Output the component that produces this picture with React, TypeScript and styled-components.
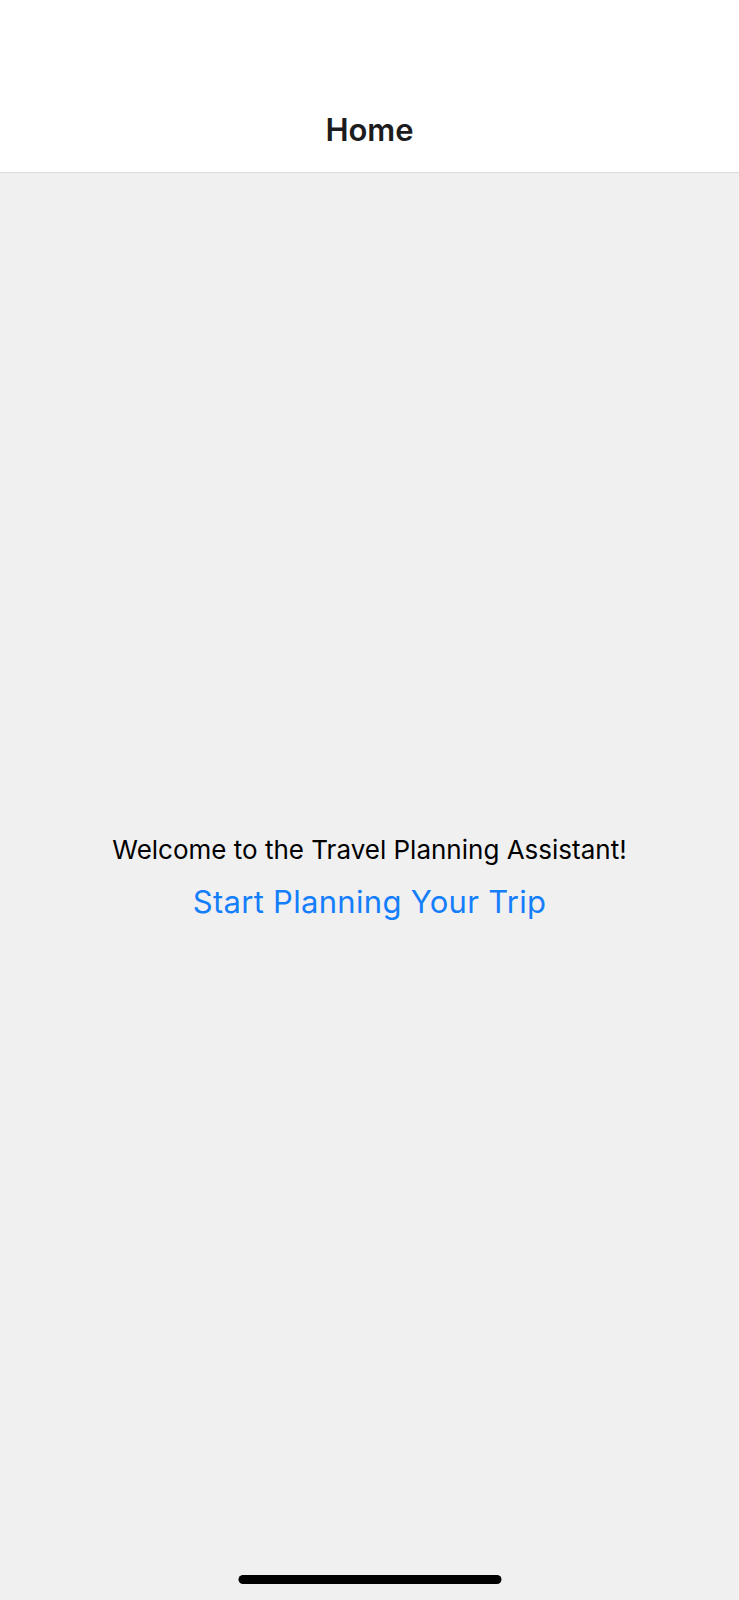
import React from "react";
import styled, { createGlobalStyle } from "styled-components";

const Global = createGlobalStyle`
  html, body { margin: 0; padding: 0; background: #f0f0f0; }
  * { box-sizing: border-box; }
`;

const Page = styled.div`
  position: relative;
  height: 1600px;
  display: flex;
  flex-direction: column;
  background: #f0f0f0;
  font-family: Inter, "Liberation Sans", Arial, sans-serif;
`;

const Header = styled.header`
  height: 173px;
  flex: none;
  background: #ffffff;
  border-bottom: 1px solid #dcdcdc;
  display: flex;
  align-items: flex-end;
  justify-content: center;
  padding-bottom: 24px;
`;

const Title = styled.h1`
  margin: 0;
  font-size: 31px;
  font-weight: 600;
  color: #1c1c1e;
  line-height: 36px;
`;

const Main = styled.main`
  flex: 1;
  display: flex;
  flex-direction: column;
  align-items: center;
  justify-content: center;
  padding-bottom: 18px;
  gap: 19px;
`;

const Welcome = styled.p`
  margin: 0;
  font-size: 26px;
  line-height: 30px;
  color: #000000;
`;

const LinkButton = styled.button`
  border: none;
  background: none;
  padding: 0;
  font-family: inherit;
  font-size: 31px;
  letter-spacing: 0.3px;
  line-height: 36px;
  color: #147efb;
  cursor: pointer;
`;

const HomeIndicator = styled.div`
  position: absolute;
  left: 50%;
  bottom: 16px;
  transform: translateX(-50%);
  width: 263px;
  height: 9px;
  border-radius: 5px;
  background: #000000;
`;

export default function App() {
  return (
    <>
      <Global />
      <Page>
        <Header>
          <Title>Home</Title>
        </Header>
        <Main>
          <Welcome>Welcome to the Travel Planning Assistant!</Welcome>
          <LinkButton>Start Planning Your Trip</LinkButton>
        </Main>
        <HomeIndicator />
      </Page>
    </>
  );
}
